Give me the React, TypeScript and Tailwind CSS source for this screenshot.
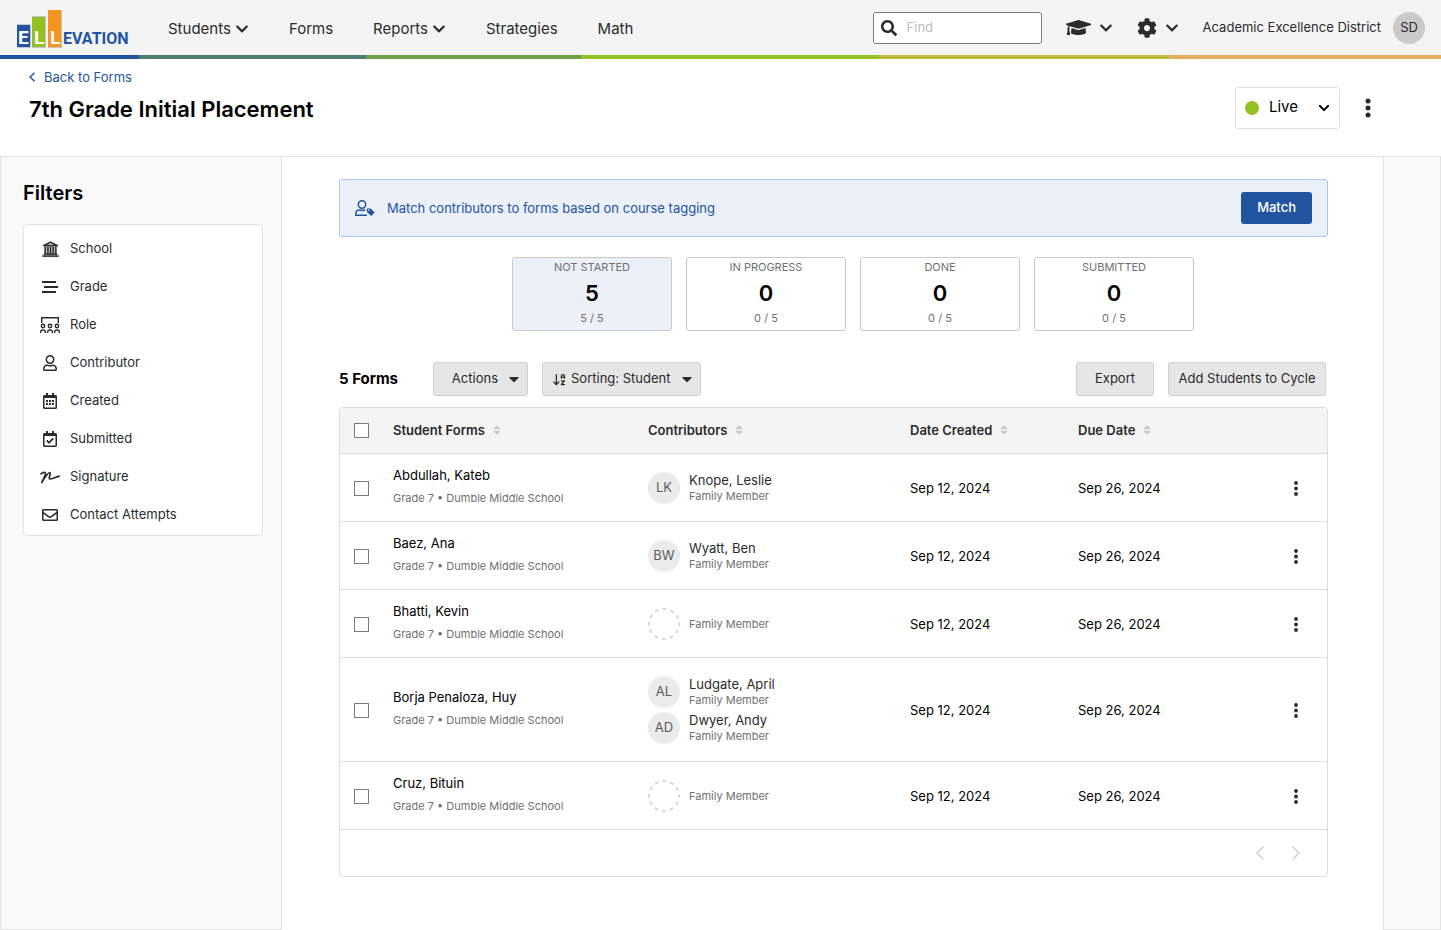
import React from "react";
import {
  FaChevronDown,
  FaCog,
  FaGraduationCap,
  FaRegCalendarAlt,
  FaRegCalendarCheck,
  FaRegEnvelope,
  FaRegUser,
  FaSearch,
  FaSort,
  FaCaretDown,
} from "react-icons/fa";
import { LiaUniversitySolid } from "react-icons/lia";
import { ArrowDownAZ, ChevronLeft, ChevronRight } from "lucide-react";

interface Contributor {
  initials?: string;
  name?: string;
  role: string;
}

interface FormRow {
  student: string;
  contributors: Contributor[];
}

const family = "Family Member";

const rows: FormRow[] = [
  {
    student: "Abdullah, Kateb",
    contributors: [{ initials: "LK", name: "Knope, Leslie", role: family }],
  },
  {
    student: "Baez, Ana",
    contributors: [{ initials: "BW", name: "Wyatt, Ben", role: family }],
  },
  { student: "Bhatti, Kevin", contributors: [{ role: family }] },
  {
    student: "Borja Penaloza, Huy",
    contributors: [
      { initials: "AL", name: "Ludgate, April", role: family },
      { initials: "AD", name: "Dwyer, Andy", role: family },
    ],
  },
  { student: "Cruz, Bituin", contributors: [{ role: family }] },
];

const stats = [
  { label: "NOT STARTED", count: 5, active: true },
  { label: "IN PROGRESS", count: 0 },
  { label: "DONE", count: 0 },
  { label: "SUBMITTED", count: 0 },
];

const Logo = () => (
  <svg width="111" height="38" viewBox="0 0 111 38" className="overflow-visible" role="img" aria-label="Ellevation">
    <rect x="0" y="14" width="14" height="24" fill="#c3c6ca" />
    <rect x="15" y="6" width="14" height="32" fill="#c3c6ca" />
    <rect x="31" y="0" width="14" height="38" fill="#c9c3bb" />
    <rect x="0" y="15" width="13" height="22" fill="#2354a0" />
    <rect x="15" y="7" width="13" height="30" fill="#93c122" />
    <rect x="31" y="0" width="13" height="37" fill="#f7941e" />
    <g fontFamily="Roboto, sans-serif" fontWeight="700">
      <g fontSize="19" fill="#ffffff">
        <text x="1" y="34">E</text>
        <text x="17" y="34">L</text>
        <text x="33" y="34">L</text>
      </g>
      <text x="46" y="34" fontSize="16" fill="#2354a0">EVATION</text>
    </g>
  </svg>
);

const GradeIcon = () => (
  <svg width="16" height="12" viewBox="0 0 16 12" fill="#2b2b2b">
    <rect x="0" y="0" width="14" height="2" />
    <rect x="2" y="5" width="14" height="2" />
    <rect x="0" y="10" width="14" height="2" />
  </svg>
);

const RoleIcon = () => (
  <svg width="20" height="16" viewBox="0 0 20 16" fill="none" stroke="#2b2b2b" strokeWidth="1.400">
    <path d="M1.7 6V.7H18.300V6" />
    <circle cx="3" cy="9" r="1.700" />
    <circle cx="10" cy="9" r="1.700" />
    <circle cx="17" cy="9" r="1.700" />
    <path d="M.7 16v-1.200c0-1 1-1.800 2.300-1.800s2.300.8 2.300 1.800V16M7.700 16v-1.200c0-1 1-1.800 2.300-1.800s2.300.8 2.300 1.800V16M14.700 16v-1.200c0-1 1-1.800 2.300-1.800s2.300.8 2.300 1.800V16" />
  </svg>
);

const SignatureIcon = () => (
  <svg width="20" height="13" viewBox="0 0 20 13" fill="none" stroke="#2b2b2b" strokeWidth="1.700" strokeLinecap="round" strokeLinejoin="round">
    <path d="M1 2.800C2.500 1.500 4.800.8 5.400 2 6 3.600 3.500 8 1.800 11.500 4.500 7 8 1.500 9.800 1.500 11.300 2 8.600 6.500 9.400 7.800 10.500 9 14.500 6.300 19.200 5.200" />
  </svg>
);

const UserTagIcon = () => (
  <svg width="20" height="16" viewBox="0 0 20 16" fill="none" stroke="#2354a0" strokeWidth="1.500">
    <circle cx="7" cy="4.500" r="3.700" />
    <path d="M12 15.200H.8v-1.400c0-2.200 1.500-3.800 3.700-3.800 1 0 1.300.6 2.500.6s1.500-.6 2.500-.6h1" />
    <path d="M12 8.500h3.600l4.100 3.900-3.500 3.500-4.200-4z" fill="#2354a0" stroke="none" />
    <circle cx="13.800" cy="10.200" r=".7" fill="#ebf0f9" stroke="none" />
  </svg>
);

const DotsIcon = ({ big = false }: { big?: boolean }) => (
  <svg width={big ? 6 : 4} height={big ? 20 : 15} viewBox={big ? "0 0 6 20" : "0 0 4 15"} fill="#2b2b2b">
    {big ? (
      <>
        <circle cx="3" cy="3" r="2.500" />
        <circle cx="3" cy="10" r="2.500" />
        <circle cx="3" cy="17" r="2.500" />
      </>
    ) : (
      <>
        <circle cx="2" cy="2" r="1.900" />
        <circle cx="2" cy="7.500" r="1.900" />
        <circle cx="2" cy="13" r="1.900" />
      </>
    )}
  </svg>
);

const filters = [
  { label: "School", icon: <LiaUniversitySolid size={21} strokeWidth={0.7} className="shrink-0" /> },
  { label: "Grade", icon: <GradeIcon /> },
  { label: "Role", icon: <RoleIcon /> },
  { label: "Contributor", icon: <FaRegUser size={16} /> },
  { label: "Created", icon: <FaRegCalendarAlt size={16} /> },
  { label: "Submitted", icon: <FaRegCalendarCheck size={16} /> },
  { label: "Signature", icon: <SignatureIcon /> },
  { label: "Contact Attempts", icon: <FaRegEnvelope size={16} /> },
];

const Header = () => (
  <header>
    <div className="flex h-[55px] items-center justify-between bg-[#f4f4f4] pl-[17px] pr-4 text-[#2b2b2b]">
      <div className="flex items-center gap-10">
        <a href="#home" className="mt-0.5">
          <Logo />
        </a>
        <nav className="mt-0.5 flex items-center gap-10 text-[15px] leading-5">
          <button className="flex items-center gap-1">
            Students <FaChevronDown size={14} />
          </button>
          <a href="#forms">Forms</a>
          <button className="flex items-center gap-1">
            Reports <FaChevronDown size={14} />
          </button>
          <a href="#strategies">Strategies</a>
          <a href="#math">Math</a>
        </nav>
      </div>
      <div className="flex items-center gap-6">
        <label className="flex h-8 w-[169px] items-center gap-2.5 rounded-[3px] border border-[#7b7b7b] bg-white px-[7px]">
          <FaSearch size={16} className="shrink-0" />
          <input
            type="text"
            aria-label="Find"
            placeholder="Find"
            className="w-full min-w-0 text-[13px] outline-none placeholder:text-[#bdbdbd]"
          />
        </label>
        <button aria-label="Courses" className="flex items-center gap-2">
          <FaGraduationCap size={25} />
          <FaChevronDown size={14} />
        </button>
        <button aria-label="Settings" className="flex items-center gap-2">
          <FaCog size={20} />
          <FaChevronDown size={14} />
        </button>
        <div className="flex items-center gap-3 text-[13px]">
          <span>Academic Excellence District</span>
          <span className="flex size-8 items-center justify-center rounded-full bg-[#c9cbca]">SD</span>
        </div>
      </div>
    </div>
    <div className="grid h-1 grid-cols-[139fr_227fr_215fr_298fr_291fr_271fr]">
      <div className="bg-[#2354a0]" />
      <div className="bg-[#4a7f70]" />
      <div className="bg-[#6f9f47]" />
      <div className="bg-[#95c225]" />
      <div className="bg-[#bdbb42]" />
      <div className="bg-[#e4b060]" />
    </div>
  </header>
);

const TitleBar = () => (
  <div className="flex h-[98px] justify-between border-b border-[#e3e3e3] pl-[29px] pr-[65px]">
    <div className="pt-2.5">
      <a href="#forms" className="flex items-center gap-2 text-[13px] leading-4 text-[#2354a0]">
        <svg width="7" height="10" viewBox="0 0 7 10" fill="none" stroke="currentColor" strokeWidth="1.500">
          <path d="M5.500.8 1 5l4.500 4.200" />
        </svg>
        Back to Forms
      </a>
      <h1 className="mt-2.5 text-[22px] font-semibold leading-7 text-black">7th Grade Initial Placement</h1>
    </div>
    <div className="flex h-[42px] items-center gap-5 self-center">
      <label className="flex h-full w-[105px] items-center rounded-[3px] border border-[#e3e3e3] px-[9px]">
        <span className="size-[14px] shrink-0 rounded-full bg-[#93c122]" />
        <select aria-label="Status" className="w-full appearance-none pl-[10px] text-[15px] text-black outline-none">
          <option>Live</option>
        </select>
        <FaChevronDown size={12} className="pointer-events-none shrink-0" />
      </label>
      <button aria-label="More options" className="flex w-4 justify-center">
        <DotsIcon big />
      </button>
    </div>
  </div>
);

const Filters = () => (
  <aside className="w-[282px] shrink-0 border-b border-x border-[#e3e3e3] bg-[#f9f9f9] pl-[22px] pr-[18px] pt-[22px]">
    <h2 className="text-[20px] font-semibold leading-7 text-black">Filters</h2>
    <ul className="mt-[17px] rounded-[4px] border border-[#e3e3e3] bg-white pt-[5px] pb-px text-[#2b2b2b]">
      {filters.map((f) => (
        <li key={f.label}>
          <button className="flex h-[38px] w-full items-center gap-2.5 pl-4 text-[13px]">
            <span className="flex w-5 justify-center">{f.icon}</span>
            {f.label}
          </button>
        </li>
      ))}
    </ul>
  </aside>
);

const Avatar = ({ initials }: { initials?: string }) =>
  initials ? (
    <span className="flex size-8 items-center justify-center rounded-full bg-[#ebebeb] text-[13px] text-[#5c5c5c]">
      {initials}
    </span>
  ) : (
    <svg width="32" height="32" viewBox="0 0 32 32" fill="none">
      <circle cx="16" cy="16" r="15" stroke="#d9d9d9" strokeWidth="2" strokeDasharray="4 3.854" strokeDashoffset="2" />
    </svg>
  );

const SortHeader = ({ label, width = "" }: { label: string; width?: string }) => (
  <th className={"text-left font-semibold " + width}>
    <button className="flex items-center gap-1.5">
      {label} <FaSort size={12} className="text-[#cccccc]" />
    </button>
  </th>
);

const checkbox = "block size-[15px] appearance-none border border-[#7b7b7b] bg-white";

const FormsTable = () => (
  <div className="mt-[11px] overflow-hidden rounded-[4px] border border-[#dddddd]">
    <table className="w-full table-fixed border-collapse text-[13px]">
      <thead className="text-[#2b2b2b]">
        <tr className="h-[45px] border-b border-[#dddddd] bg-[#f4f4f4]">
          <th className="w-[53px] pl-[14px]">
            <input type="checkbox" aria-label="Select all forms" className={checkbox} />
          </th>
          <SortHeader label="Student Forms" width="w-[255px]" />
          <SortHeader label="Contributors" width="w-[262px]" />
          <SortHeader label="Date Created" width="w-[168px]" />
          <SortHeader label="Due Date" />
          <th className="w-[50px]" />
        </tr>
      </thead>
      <tbody>
        {rows.map((row) => (
          <tr key={row.student} className="h-[68px] border-b border-[#dddddd]">
            <td className="pl-[14px] pt-0.5">
              <input type="checkbox" aria-label={"Select " + row.student} className={checkbox} />
            </td>
            <td className="pb-0.5">
              <div className="leading-6 text-black">{row.student}</div>
              <div className="text-[11px] leading-[22px] text-[#707070]">Grade 7 • Dumble Middle School</div>
            </td>
            <td>
              <div className={"flex flex-col gap-1 " + (row.contributors.length > 1 ? "pb-[17px] pt-[18px]" : "pt-0.5")}>
                {row.contributors.map((c, i) => (
                  <div key={i} className="flex items-center gap-[9px]">
                    <Avatar initials={c.initials} />
                    <div>
                      {c.name && <div className="leading-4 text-[#2b2b2b]">{c.name}</div>}
                      <div className="text-[11px] leading-4 text-[#707070]">{c.role}</div>
                    </div>
                  </div>
                ))}
              </div>
            </td>
            <td className="pt-1 text-black">Sep 12, 2024</td>
            <td className="pt-1 text-black">Sep 26, 2024</td>
            <td className="pt-0.5">
              <button aria-label={"Options for " + row.student} className="flex w-[38px] justify-center">
                <DotsIcon />
              </button>
            </td>
          </tr>
        ))}
      </tbody>
    </table>
    <div className="flex h-[46px] items-center justify-end gap-3 pr-[19px] text-[#cfcfcf]">
      <button aria-label="Previous page">
        <ChevronLeft size={24} strokeWidth={1.5} />
      </button>
      <button aria-label="Next page">
        <ChevronRight size={24} strokeWidth={1.5} />
      </button>
    </div>
  </div>
);

const Toolbar = () => (
  <div className="mt-[31px] flex items-center justify-between pr-0.5 text-[13px] text-[#2b2b2b]">
    <div className="flex items-center">
      <h2 className="w-[94px] text-[15px] font-bold text-black">5 Forms</h2>
      <button className="flex h-[34px] w-[95px] items-center justify-end gap-2 rounded-[3px] border border-[#cfcfcf] bg-[#e6e6e6] pr-[5px]">
        Actions <FaCaretDown size={16} />
      </button>
      <label className="ml-[14px] flex h-[34px] w-[159px] items-center gap-1 rounded-[3px] border border-[#cfcfcf] bg-[#e6e6e6] pl-[9px] pr-[5px]">
        <ArrowDownAZ size={15} strokeWidth={2} className="shrink-0" />
        <select aria-label="Sorting" className="w-full appearance-none outline-none">
          <option>Sorting: Student</option>
        </select>
        <FaCaretDown size={16} className="pointer-events-none shrink-0" />
      </label>
    </div>
    <div className="flex gap-[14px]">
      <button className="h-[34px] w-[78px] rounded-[3px] border border-[#cfcfcf] bg-[#e6e6e6]">Export</button>
      <button className="h-[34px] w-[158px] rounded-[3px] border border-[#cfcfcf] bg-[#e6e6e6]">
        Add Students to Cycle
      </button>
    </div>
  </div>
);

export default function App() {
  return (
    <div className="flex min-h-screen flex-col bg-white font-['Inter',sans-serif]">
      <Header />
      <TitleBar />
      <div className="flex flex-1">
        <Filters />
        <main className="min-w-0 flex-1 pb-10 pl-[57px] pr-[55px] pt-[22px]">
          <div className="flex h-[58px] items-center rounded-[3px] border border-[#a9c6f7] bg-[#ebf0f9] px-[15px] text-[13px]">
            <UserTagIcon />
            <p className="ml-3 flex-1 pt-0.5 text-[#2354a0]">Match contributors to forms based on course tagging</p>
            <button className="h-8 rounded-[3px] bg-[#2354a0] px-4 font-medium text-white">Match</button>
          </div>
          <div className="mt-5 flex justify-center gap-[14px] pl-[39px]">
            {stats.map((s) => (
              <button
                key={s.label}
                className={
                  "flex h-[74px] w-40 flex-col items-center rounded-[3px] border border-[#c8c8c8] text-[11px] text-[#707070] " +
                  (s.active ? "bg-[#ebf0f9]" : "bg-white")
                }
              >
                <span className="leading-[18px]">{s.label}</span>
                <span className="text-[22px] font-semibold leading-[34px] text-black">{s.count}</span>
                <span className="leading-4">{s.count} / 5</span>
              </button>
            ))}
          </div>
          <Toolbar />
          <FormsTable />
        </main>
        <div className="w-[58px] shrink-0 border-b border-x border-[#e3e3e3] bg-[#f9f9f9]" />
      </div>
    </div>
  );
}
